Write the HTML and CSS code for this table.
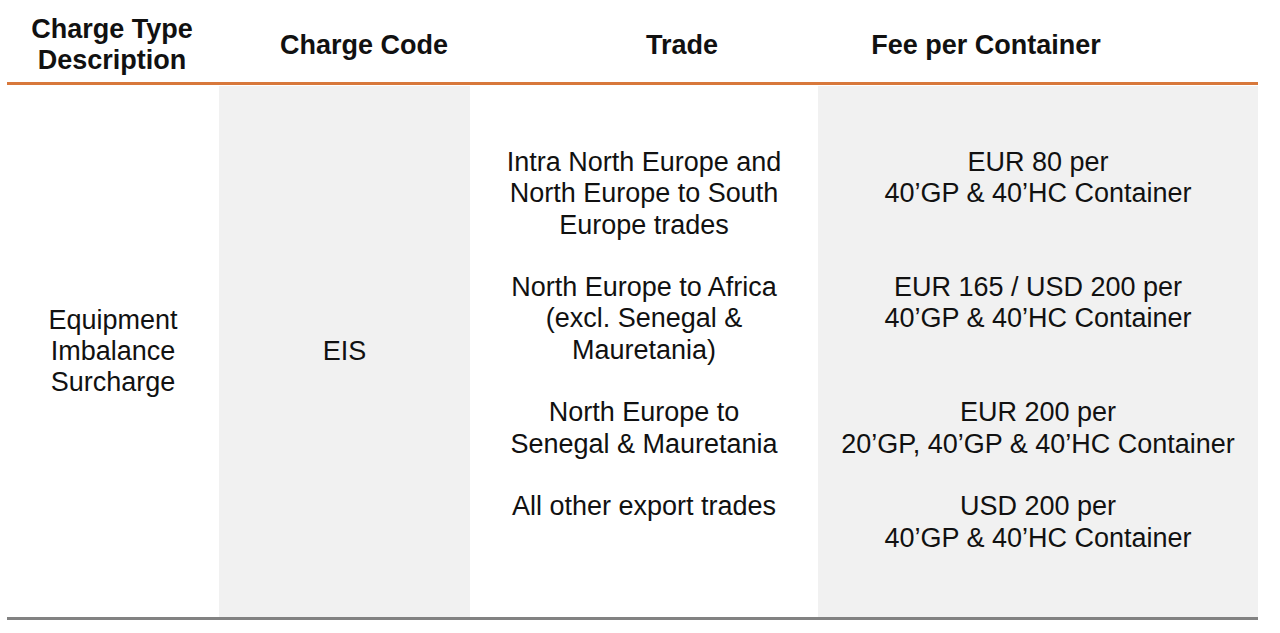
FILE: index.html
```html
<!DOCTYPE html>
<html lang="en">
<head>
<meta charset="utf-8">
<title>Equipment Imbalance Surcharge</title>
<link rel="stylesheet" href="styles.css">
</head>
<body>
<div class="sheet">
  <div class="head">
    <div class="hcell">Charge Type<br>Description</div>
    <div class="hcell">Charge Code</div>
    <div class="hcell">Trade</div>
    <div class="hcell">Fee per Container</div>
    <div></div>
  </div>
  <div class="body">
    <div class="cell mid">Equipment<br>Imbalance<br>Surcharge</div>
    <div class="cell mid shade">EIS</div>
    <div class="cell top">
      <p>Intra North Europe and<br>North Europe to South<br>Europe trades</p>
      <p>North Europe to Africa<br>(excl. Senegal &amp;<br>Mauretania)</p>
      <p>North Europe to<br>Senegal &amp; Mauretania</p>
      <p>All other export trades</p>
    </div>
    <div class="cell top shade">
      <p class="gap2">EUR 80 per<br>40’GP &amp; 40’HC Container</p>
      <p class="gap2">EUR 165 / USD 200 per<br>40’GP &amp; 40’HC Container</p>
      <p>EUR 200 per<br>20’GP, 40’GP &amp; 40’HC Container</p>
      <p>USD 200 per<br>40’GP &amp; 40’HC Container</p>
    </div>
  </div>
</div>
</body>
</html>
```

FILE: styles.css
```css
html, body {
  margin: 0;
  padding: 0;
  background: #ffffff;
}

body {
  font-family: "Liberation Sans", Arial, sans-serif;
  color: #111111;
  font-size: 27px;
}

.sheet {
  width: 1251px;
  margin-left: 7px;
}

.head {
  display: grid;
  grid-template-columns: 210px 294px 342px 266px 1fr;
  align-items: center;
  height: 74px;
  padding-top: 8px;
  border-bottom: 3px solid #d8783b;
}

.hcell {
  font-weight: bold;
  text-align: center;
  line-height: 31px;
}

.body {
  display: grid;
  grid-template-columns: 212px 251px 348px 440px;
  height: 531px;
  margin-top: 1px;
  border-bottom: 3px solid #828282;
}

.cell {
  text-align: center;
  line-height: 31.3px;
}

.mid {
  display: flex;
  align-items: center;
  justify-content: center;
}

.top {
  padding-top: 61px;
}

.shade {
  background: #f1f1f1;
}

.top p {
  margin: 0 0 31.3px 0;
}

.top p.gap2 {
  margin-bottom: 62.6px;
}
```
